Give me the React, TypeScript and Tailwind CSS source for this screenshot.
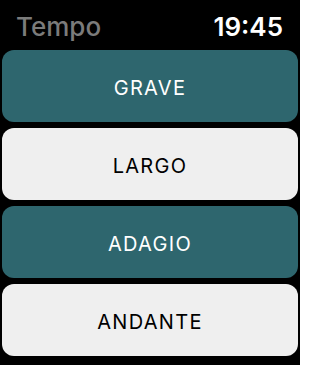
const tempos = [
  { name: 'GRAVE', dark: true },
  { name: 'LARGO', dark: false },
  { name: 'ADAGIO', dark: true },
  { name: 'ANDANTE', dark: false },
]

export default function App() {
  return (
    <div className="w-[300px] h-[365px] bg-black overflow-hidden font-['Inter',sans-serif]">
      <div className="flex items-end justify-between pl-[16px] pr-[17px] h-[44px]">
        <span className="text-[26px] leading-none font-medium text-[#7b7b7b] mb-[4px]">Tempo</span>
        <span className="text-[26px] leading-none font-semibold text-white mb-[4px]">19:45</span>
      </div>
      <div className="flex flex-col gap-[6px] px-[2px] pt-[6px]">
        {tempos.map(t => (
          <div
            key={t.name}
            className={`h-[72px] rounded-[12px] flex items-center justify-center pt-[3px] text-[20px] tracking-[1.3px] ${
              t.dark ? 'bg-[#2e666e] text-white' : 'bg-[#efefef] text-black'
            }`}
          >
            {t.name}
          </div>
        ))}
      </div>
    </div>
  )
}
